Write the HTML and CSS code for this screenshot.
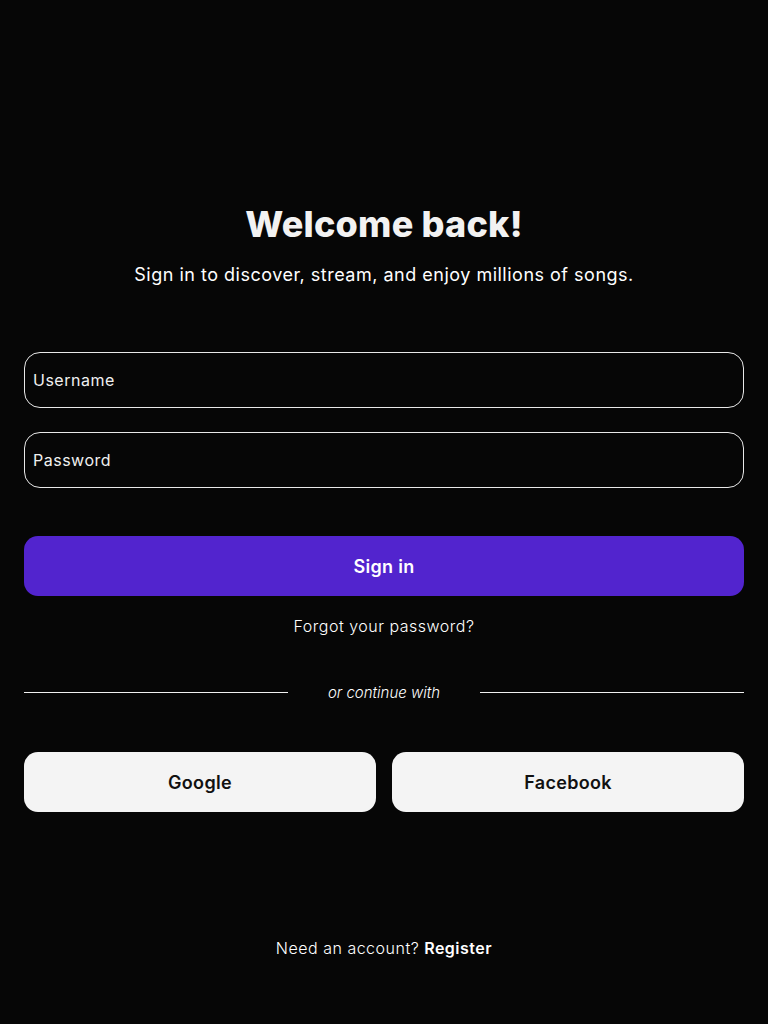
FILE: index.html
```html
<!DOCTYPE html>
<html lang="en">
<head>
<meta charset="utf-8">
<title>Sign in</title>
<link rel="stylesheet" href="styles.css">
</head>
<body>
<main class="page">
  <header class="intro">
    <h1 class="title">Welcome back!</h1>
    <p class="subtitle">Sign in to discover, stream, and enjoy millions of songs.</p>
  </header>
  <form class="form">
    <div class="fields">
      <input class="field" type="text" placeholder="Username">
      <input class="field" type="password" placeholder="Password">
    </div>
    <button class="primary" type="button">Sign in</button>
    <a class="forgot" href="#">Forgot your password?</a>
  </form>
  <div class="divider">
    <span class="rule"></span>
    <span class="divider-text">or continue with</span>
    <span class="rule"></span>
  </div>
  <div class="socials">
    <button class="social" type="button">Google</button>
    <button class="social" type="button">Facebook</button>
  </div>
  <p class="footer">Need an account? <a class="register" href="#">Register</a></p>
</main>
</body>
</html>
```
FILE: styles.css
```css
* { box-sizing: border-box; }
html, body { margin: 0; padding: 0; }
body {
  background: #060606;
  color: #f2f2f2;
  font-family: Inter, "Noto Sans", sans-serif;
  width: 768px;
  height: 1024px;
}
.page {
  display: flex;
  flex-direction: column;
  padding: 200px 24px 0;
}
.intro {
  display: flex;
  flex-direction: column;
  align-items: center;
}
.title {
  margin: 0;
  font-size: 36px;
  line-height: 48px;
  font-weight: 800;
  letter-spacing: 0.2px;
  color: #f2f2f2;
}
.subtitle {
  margin: 14px 0 0;
  font-size: 18px;
  line-height: 26px;
  font-weight: 400;
  letter-spacing: 0.5px;
  color: #fff;
}
.form {
  display: flex;
  flex-direction: column;
  margin-top: 64px;
}
.fields {
  display: flex;
  flex-direction: column;
  gap: 24px;
}
.field {
  height: 56px;
  width: 100%;
  background: #060606;
  border: 1px solid #e8e8e8;
  border-radius: 16px;
  padding: 0 8px;
  font-family: inherit;
  font-size: 16px;
  letter-spacing: 0.5px;
  color: #fff;
  outline: none;
}
.field::placeholder { color: #f0f0f0; }
.primary {
  margin-top: 48px;
  height: 60px;
  border: none;
  border-radius: 14px;
  background: #5224ce;
  color: #fff;
  font-family: inherit;
  font-size: 18px;
  font-weight: 600;
  letter-spacing: 0.3px;
}
.forgot {
  align-self: center;
  margin-top: 19px;
  font-size: 16px;
  line-height: 22px;
  font-weight: 300;
  letter-spacing: 0.5px;
  color: #fff;
  text-decoration: none;
}
.divider {
  display: flex;
  align-items: center;
  margin-top: 43px;
  height: 24px;
}
.rule {
  flex: 1;
  height: 1px;
  background: #f0f0f0;
}
.divider-text {
  padding: 0 40px;
  font-size: 15px;
  font-style: italic;
  font-weight: 300;
  letter-spacing: 0;
  color: #fff;
}
.socials {
  display: grid;
  grid-template-columns: 1fr 1fr;
  gap: 16px;
  margin-top: 48px;
}
.social {
  height: 60px;
  border: none;
  border-radius: 14px;
  background: #f4f4f4;
  color: #111;
  font-family: inherit;
  font-size: 18px;
  font-weight: 600;
  letter-spacing: 0.3px;
}
.footer {
  margin: 124px 0 0;
  text-align: center;
  font-size: 16px;
  line-height: 24px;
  font-weight: 300;
  letter-spacing: 0.5px;
  color: #fff;
}
.register {
  font-weight: 600;
  color: #fff;
  text-decoration: none;
}
```
